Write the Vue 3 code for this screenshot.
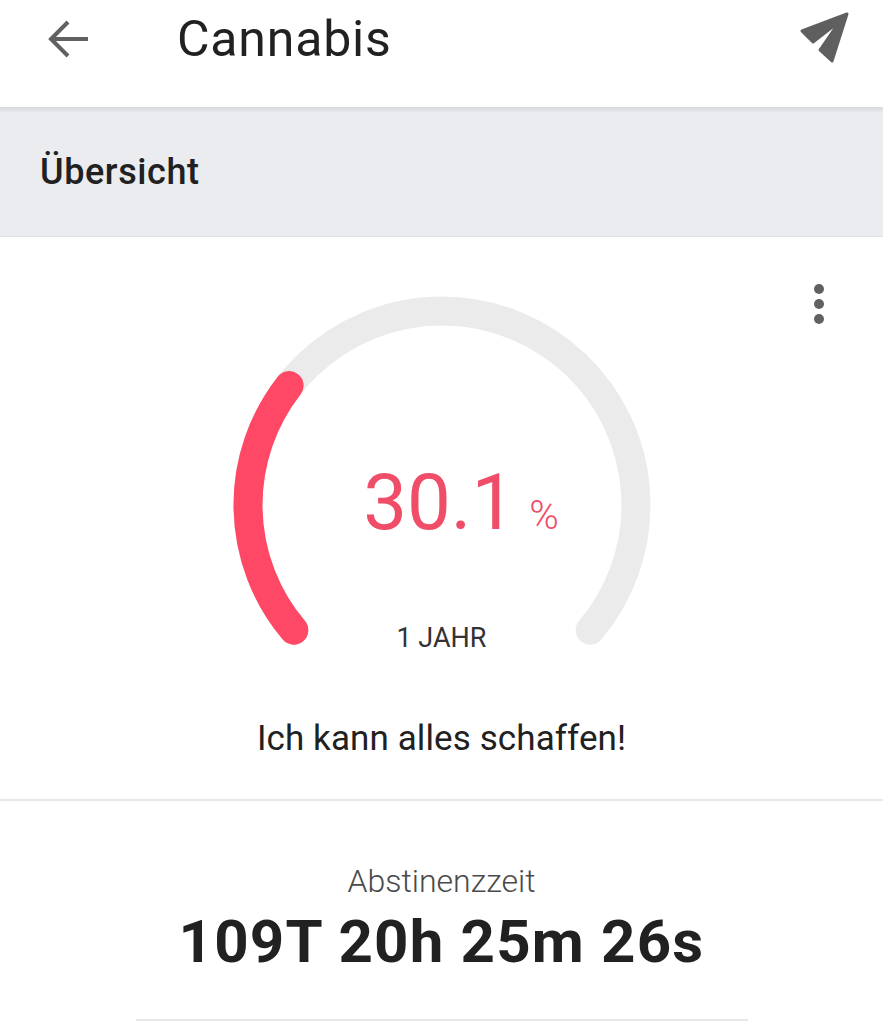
<script setup>
const radius = 194
const cx = 224
const cy = 224
const progress = 30.1

// angles clockwise from +x, the gauge runs from lower left over the top to lower right
const begin = 139.8
const end = 400.2
const valueEnd = 218

function point(angle) {
  const rad = (angle * Math.PI) / 180
  return [cx + radius * Math.cos(rad), cy + radius * Math.sin(rad)]
}

function arc(from, to) {
  const [x1, y1] = point(from)
  const [x2, y2] = point(to)
  const large = to - from > 180 ? 1 : 0
  return `M ${x1} ${y1} A ${radius} ${radius} 0 ${large} 1 ${x2} ${y2}`
}

const trackPath = arc(begin, end)
const valuePath = arc(begin, valueEnd)
</script>

<template>
  <div class="page">
    <header class="topbar">
      <button class="icon-btn back" aria-label="Zurück">
        <svg width="44" height="40" viewBox="0 0 44 40">
          <path d="M41 20H5M21 3 4 20l17 17" fill="none" stroke="#616161" stroke-width="4" />
        </svg>
      </button>
      <h1 class="title">Cannabis</h1>
      <button class="icon-btn send" aria-label="Senden">
        <svg width="52" height="52" viewBox="0 0 52 52">
          <path d="M48 2 3 19 14 30 41 9 21 38 33 49Z" fill="#5f5f5f" stroke="#5f5f5f" stroke-width="3" stroke-linejoin="round" />
        </svg>
      </button>
    </header>

    <div class="section-bar">Übersicht</div>

    <section class="gauge-card">
      <button class="more" aria-label="Mehr">
        <span></span><span></span><span></span>
      </button>
      <div class="gauge">
        <svg width="448" height="390" viewBox="0 0 448 390">
          <path :d="trackPath" fill="none" stroke="#ebebeb" stroke-width="29" stroke-linecap="round" />
          <path :d="valuePath" fill="none" stroke="#ff4766" stroke-width="29" stroke-linecap="round" />
        </svg>
        <div class="value"><span class="num">{{ progress }}</span><span class="pct">%</span></div>
        <div class="goal">1 JAHR</div>
      </div>
      <p class="motto">Ich kann alles schaffen!</p>
    </section>

    <section class="stats">
      <div class="stat-label">Abstinenzzeit</div>
      <div class="stat-value">109T 20h 25m 26s</div>
      <div class="rule"></div>
    </section>
  </div>
</template>

<style scoped>
.page {
  width: 883px;
  height: 1024px;
  overflow: hidden;
  background: #fff;
  font-family: Roboto, "Noto Sans", sans-serif;
  color: #212121;
}

.topbar {
  height: 107px;
  display: flex;
  align-items: flex-start;
  padding: 0 32px 0 47px;
  box-sizing: border-box;
}

.icon-btn {
  border: none;
  background: none;
  padding: 0;
  display: flex;
}

.back {
  margin-top: 19px;
}

.title {
  margin: 9px 0 0 86px;
  font-size: 50px;
  line-height: 60px;
  font-weight: 400;
  letter-spacing: 0.8px;
  flex: 1;
}

.send {
  margin-top: 12px;
}

.section-bar {
  height: 130px;
  box-sizing: border-box;
  padding: 0 0 0 40px;
  display: flex;
  align-items: center;
  background: linear-gradient(#d5d8da, #eaecef 6px);
  border-bottom: 1px solid #dfe0e2;
  font-size: 36px;
  font-weight: 500;
  letter-spacing: 0.6px;
}

.gauge-card {
  position: relative;
  height: 564px;
  box-sizing: border-box;
  padding-top: 44px;
  border-bottom: 2px solid #e8e8e8;
  display: flex;
  flex-direction: column;
  align-items: center;
}

.more {
  position: absolute;
  top: 47px;
  right: 59px;
  border: none;
  background: none;
  padding: 0;
  display: flex;
  flex-direction: column;
  gap: 5px;
}

.more span {
  width: 10px;
  height: 10px;
  border-radius: 50%;
  background: #616161;
}

.gauge {
  position: relative;
  width: 448px;
  height: 390px;
}

.gauge svg {
  display: block;
}

.value {
  position: absolute;
  top: 175px;
  left: 0;
  right: 0;
  padding-left: 39px;
  display: flex;
  justify-content: center;
  align-items: baseline;
  color: #f04d69;
}

.num {
  font-size: 78px;
  line-height: 94px;
  font-weight: 400;
}

.pct {
  margin-left: 14px;
  font-size: 40px;
  font-weight: 300;
}

.goal {
  position: absolute;
  top: 341px;
  left: 0;
  right: 0;
  text-align: center;
  font-size: 27px;
  line-height: 32px;
  color: #333;
}

.motto {
  margin: 46px 0 0;
  font-size: 35px;
  line-height: 44px;
  letter-spacing: 0.1px;
  color: #212121;
}

.stats {
  display: flex;
  flex-direction: column;
  align-items: center;
  padding-top: 61px;
}

.stat-label {
  font-size: 32px;
  line-height: 38px;
  font-weight: 300;
  color: #4a4a4a;
}

.stat-value {
  margin-top: 7px;
  font-size: 60px;
  line-height: 70px;
  font-weight: 700;
  letter-spacing: 1.2px;
}

.rule {
  width: 612px;
  height: 2px;
  margin-top: 42px;
  background: #e8e8e8;
}
</style>

<style>
html, body {
  background: #fff;
}
</style>
